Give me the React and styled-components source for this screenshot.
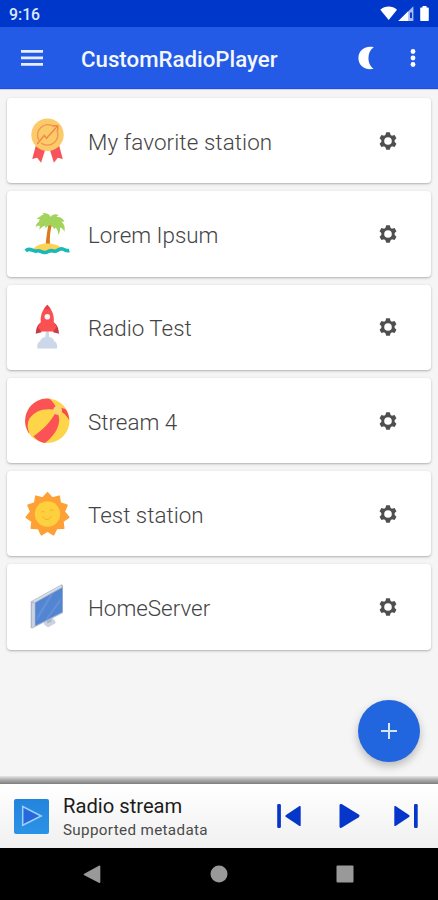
import React from 'react';
import styled, { createGlobalStyle } from 'styled-components';

const GlobalStyle = createGlobalStyle`
  body {
    margin: 0;
    background: #f5f5f5;
    font-family: Roboto, "Liberation Sans", sans-serif;
  }

  svg {
    display: block;
    flex: none;
  }

  button {
    display: flex;
    align-items: center;
    justify-content: center;
    padding: 0;
    border: 0;
    background: none;
  }
`;

const Screen = styled.div`
  position: relative;
  display: flex;
  flex-direction: column;
  width: 438px;
  height: 900px;
  overflow: hidden;
`;

const StatusBar = styled.div`
  display: flex;
  justify-content: space-between;
  align-items: center;
  height: 27px;
  padding: 0 8px 0 9px;
  box-sizing: border-box;
  background: #0037cb;
`;

const Clock = styled.span`
  padding-top: 2px;
  color: #dfe7ff;
  font-size: 15.8px;
  font-weight: 500;
`;

const Header = styled.header`
  display: flex;
  align-items: center;
  height: 62px;
  padding: 0 3px 0 20px;
  box-sizing: border-box;
  background: #235ae6;
  border-bottom: 1px solid #1f50dc;
  box-shadow: 0 1px 0 #cdd2fb;
`;

const Title = styled.h1`
  flex: 1;
  margin: 3px 0 0 37px;
  color: #f4f7ff;
  font-size: 22.25px;
  font-weight: 500;
  white-space: nowrap;
`;

const HeaderButton = styled.button`
  width: ${props => props.$width}px;
  height: 40px;
  padding-top: 1px;
`;

const StationList = styled.main`
  display: flex;
  flex-direction: column;
  flex: 1;
  gap: 8px;
  padding: 9px 7px 0;
`;

const StationCard = styled.div`
  display: flex;
  align-items: center;
  height: 85.3px;
  padding: 0 33px 0 16px;
  box-sizing: border-box;
  border-radius: 4px;
  background: #fff;
  box-shadow: 0 1px 3px rgba(0, 0, 0, 0.22), 0 1px 1px rgba(0, 0, 0, 0.08);
`;

const StationName = styled.span`
  flex: 1;
  margin: 2px 0 0 17px;
  color: #444;
  font-size: 22.4px;
  font-weight: 300;
  letter-spacing: ${props => props.$spacing || 0}px;
`;

const AddButton = styled.button`
  position: absolute;
  left: 358px;
  top: 700px;
  width: 62px;
  height: 62px;
  border-radius: 50%;
  background: #2166df;
  box-shadow: 0 4px 8px rgba(0, 0, 0, 0.25);
`;

const PlayerShadow = styled.div`
  height: 8px;
  background: linear-gradient(#e6e6e6, #b0b0b0 45%, #7d7d7d);
`;

const Player = styled.footer`
  display: flex;
  align-items: center;
  height: 64px;
  padding: 0 19px 0 14px;
  box-sizing: border-box;
  background: linear-gradient(#fff, #f0f0f0);
`;

const Cover = styled.div`
  display: flex;
  align-items: center;
  justify-content: center;
  width: 35px;
  height: 35px;
  border-radius: 2px;
  background: linear-gradient(#2384dc, #2b93e6);
`;

const TrackInfo = styled.div`
  display: flex;
  flex: 1;
  flex-direction: column;
  margin: 3px 0 0 14px;
  white-space: nowrap;
`;

const TrackTitle = styled.span`
  color: #1c1c1c;
  font-size: 20.2px;
  line-height: 24px;
`;

const TrackMeta = styled.span`
  color: #4a4a4a;
  font-size: 15.2px;
  letter-spacing: 0.35px;
  line-height: 24px;
`;

const Controls = styled.div`
  display: flex;
  justify-content: space-between;
  width: 143px;
`;

const NavBar = styled.nav`
  display: flex;
  align-items: center;
  justify-content: space-between;
  height: 52px;
  padding: 0 84px 0 83px;
  box-sizing: border-box;
  background: #000;
`;

function MedalIcon() {
  return (
    <svg width="48" height="48" viewBox="0 0 48 48">
      <path d="M13 28 9.200 42l5-1.300 3.900 5.100L22.400 32zM36 28l3.800 14-5-1.300-3.900 5.100L26.600 32z" fill="#f9545b" />
      <circle cx="24.500" cy="17.800" r="16.200" fill="#fccb69" />
      <path d="M31 9.500A10.500 10.500 0 0 0 16 23.500M18 26A10.500 10.500 0 0 0 33.800 13" fill="none" stroke="#f39352" strokeWidth="1.400" />
      <path d="m14.200 27 7-8.500 2.300 2.800L34.300 9.200M30 8.800h4.800v4.600" fill="none" stroke="#f28a4c" strokeWidth="1.500" />
    </svg>
  );
}

function PalmIcon() {
  return (
    <svg width="48" height="48" viewBox="0 0 48 48">
      <path d="M25.500 13c-.8 7-2.500 14-2.800 22h4.300c-.5-8 .2-15 2.200-21z" fill="#d77a20" />
      <path d="M26.500 11.500C24.500 5 18 4.500 13.500 9.200c3-.3 4.500.1 5.700 1.200-3.500.4-6 2.600-6.500 6.800 1.300-1.200 2.600-1.600 4-1.500l-.2 4.600c1.600-2.900 3.600-4.200 5.800-4.500l.1 3c1.500-2.200 3.200-3.200 5-3.500 2 1.300 3.300 2.400 4.100 4.300l.9-2c2 1.500 2.700 3.800 2.900 7.200 1.700-2.200 2.200-5 1.500-7.200 2 .4 3.600 1.600 4.500 4.200 1.300-3.900-.1-7.800-3-10.300l3.200.2c-1.600-3.500-4.600-5.300-8-4.600.4-1 1.100-1.700 2.100-2.200-3.500-1.300-6.800-.3-8 2.200-.7-2.600-3.500-4-8.100-4l1.800 2.900c-1 0-2 .2-2.800.7 3.500.1 6 1.800 8 4.800z" fill="#a2d45b" />
      <path d="M18 5.500c5-2.500 9 1 10.500 4.500 2-2.500 5-3 8-.5L36 15l-8-1-9 1-3-4z" fill="#a2d45b" />
      <path d="M9 40c3-4 8-6.600 15.500-6.600S37.500 36 40.500 40c-5 3-26 3-31.500 0z" fill="#fdd255" />
      <path d="M2.700 41c4.300-4.500 7 1.200 10.900 0 3.700-1.200 5 1.900 8.400 1.500 3.700-.4 4.600-3.100 8.400-1.500 3.700 1.600 5.300-3.300 9-2.100 2.900.9 3.800 2.400 6.900 1.500" fill="none" stroke="#18b9b8" strokeWidth="3.600" />
    </svg>
  );
}

function RocketIcon() {
  return (
    <svg width="48" height="48" viewBox="0 0 48 48">
      <path d="M23 28h2.700l.5 6c3 .5 4.500 2 4.800 4 2.500.7 3.700 4 3 7.500H14.300c-.6-3.500.7-6.500 3-7.500.3-2 2-3.500 5-4z" fill="#ccd8e9" />
      <path d="M18 19.500c-3 1.800-4.900 4.500-5.200 11.200l5.700-1.500zM30.600 19.500c3 1.800 5 4.500 5.400 11.200l-5.900-1.500z" fill="#c83c4a" />
      <path d="M24.300 1.800C19 7 17.300 13 17.800 19l-2.800 5L18 28.500h12.600l3-4.500-2.800-5C31.300 13 29.500 7 24.300 1.800z" fill="#fb4f50" />
      <path d="M24.300 1.800c-1.400 1.500-2.400 3-3.200 4.800h6.400c-.8-1.800-1.800-3.300-3.200-4.800z" fill="#df444c" />
      <circle cx="24.300" cy="13.700" r="2.800" fill="#f3f6fb" />
    </svg>
  );
}

function BallIcon() {
  return (
    <svg width="48" height="48" viewBox="0 0 48 48">
      <circle cx="24.300" cy="23.800" r="22.200" fill="#fed448" />
      <path d="M6.200 36.700C8 23 18 11 34 13 32.500 8.500 30 4.500 26.500 1.700A22.200 22.200 0 0 0 6.200 36.700z" fill="#fb5355" />
      <path d="M6.500 36.500C4 31 4 26 6.500 21.500 12 13.500 22 10.500 33 13 26 26 17 34 6.500 36.500z" fill="#fed448" />
      <path d="M10.500 39.200C20 33 28 24.500 33.500 14c6.500 10 .5 23-11.500 31.900-4.500-.4-8.700-3-11.500-6.700z" fill="#fb5355" />
      <path d="M35 10.500c3.500 0 6.300 1.200 8 2 1.900 3.200 3 6.700 3.300 10.600-2.700-4.700-6.300-8.300-11.300-10.200z" fill="#f44e50" />
      <circle cx="34.600" cy="13.300" r="4.400" fill="#fbd375" />
    </svg>
  );
}

// alternating outer / inner vertices of the eleven rays
const rays = Array.from({ length: 22 }, (_, i) => {
  const angle = (Math.PI * i) / 11 - Math.PI / 2;
  const radius = i % 2 ? 17 : 21.5;
  return `${24.5 + radius * Math.cos(angle)},${24.2 + radius * Math.sin(angle)}`;
}).join(' ');

function SunIcon() {
  return (
    <svg width="48" height="48" viewBox="0 0 48 48">
      <polygon points={rays} fill="#fda137" stroke="#fda137" strokeWidth="1.500" strokeLinejoin="round" />
      <circle cx="24.500" cy="24" r="12.700" fill="#fed03d" />
      <path d="M18.500 22.500c1-1.500 2.500-1.500 3.500 0M27 21c1-1.500 2.500-1.500 3.500 0M19.500 26.500c2 4 7 3.800 9-.5" fill="none" stroke="#eeaf38" strokeWidth="1" />
    </svg>
  );
}

function MonitorIcon() {
  return (
    <svg width="48" height="48" viewBox="0 0 48 48">
      <path d="M21 41.500v-2.700l8.500-4.500 1.500 2.500 1.500 1.500v2L25 44.500z" fill="#cbd3e0" />
      <path d="M24 36.500v4l4.500-1.500v-5z" fill="#aab8ce" />
      <path d="m7.700 18.500 31-17.200 1.300 1.200v27.400L9 45.500l-1.300-.8z" fill="#aeb8ca" />
      <path d="M9 20.500 11.800 19v24.200L9 44.600z" fill="#c8d2e1" />
      <path d="m9 18.500 29.500-16.200v1.800L12 19z" fill="#d9dfe9" />
      <path d="M12.300 19.700 39.300 4.800v24.300L12.300 42.700z" fill="#5285d2" />
      <path d="m14 33 13-21.200 4.500-2.500L14 38zM22 37 37.500 15v4L25 35.800z" fill="#6390d8" />
    </svg>
  );
}

function GearIcon() {
  return (
    <svg width="20" height="20" viewBox="-10 -10 20 20">
      <circle r="5.200" fill="none" stroke="#4f4f4f" strokeWidth="2.800" />
      {[0, 60, 120, 180, 240, 300].map(angle => (
        <path key={angle} d="M-2.900-5-1.800-8.700h3.600l1.100 3.700z" fill="#4f4f4f" transform={`rotate(${angle})`} />
      ))}
    </svg>
  );
}

function StatusIcons() {
  return (
    <svg width="50" height="17" viewBox="0 0 50 17" fill="#fff">
      <path d="M.3 4.700c4.800-4.200 12-4.200 16.700 0L8.700 15z" />
      <path d="M18.400 16 33.400 1.200V16z" fill="#a9bdf4" />
      <path d="M18.400 16 28.200 6.300V16z" />
      <path d="M30 7.500h2V13h-2z" fill="#0c3bca" />
      <path d="M42.500 1h4v1.400h1.300c.6 0 1 .4 1 1V15c0 .6-.4 1-1 1h-6.600c-.6 0-1-.4-1-1V3.400c0-.6.4-1 1-1h1.300z" />
    </svg>
  );
}

const stations = [
  { name: 'My favorite station', icon: MedalIcon, spacing: 0.1 },
  { name: 'Lorem Ipsum', icon: PalmIcon },
  { name: 'Radio Test', icon: RocketIcon },
  { name: 'Stream 4', icon: BallIcon },
  { name: 'Test station', icon: SunIcon },
  { name: 'HomeServer', icon: MonitorIcon },
];

export default function App() {
  return (
    <Screen>
      <GlobalStyle />
      <StatusBar>
        <Clock>9:16</Clock>
        <StatusIcons />
      </StatusBar>
      <Header>
        <HeaderButton $width={24} aria-label="Menu">
          <svg width="22" height="16" viewBox="0 0 22 16" fill="#e8eeff">
            <path d="M0 0h22v2.700H0zM0 6.600h22v2.600H0zM0 13h22v2.700H0z" />
          </svg>
        </HeaderButton>
        <Title>CustomRadioPlayer</Title>
        <HeaderButton $width={50} aria-label="Night mode">
          <svg width="16" height="24" viewBox="0 0 16 24" fill="#fff">
            <path d="M15.700 1.200C8.500-.8.400 3.500.4 12s8 12.800 15.300 10.800C8.700 18.500 8.700 5.500 15.700 1.200z" />
          </svg>
        </HeaderButton>
        <HeaderButton $width={44} aria-label="More">
          <svg width="6" height="20" viewBox="0 0 6 20" fill="#fff">
            <circle cx="3" cy="3.500" r="2.400" />
            <circle cx="3" cy="10" r="2.400" />
            <circle cx="3" cy="16.500" r="2.400" />
          </svg>
        </HeaderButton>
      </Header>
      <StationList>
        {stations.map(({ name, icon: Icon, spacing }) => (
          <StationCard key={name}>
            <Icon />
            <StationName $spacing={spacing}>{name}</StationName>
            <GearIcon />
          </StationCard>
        ))}
      </StationList>
      <AddButton aria-label="Add station">
        <svg width="16" height="16" viewBox="0 0 16 16" stroke="#d5e6ff" strokeWidth="2">
          <path d="M8 0v16M0 8h16" />
        </svg>
      </AddButton>
      <PlayerShadow />
      <Player>
        <Cover>
          <svg width="22" height="22" viewBox="0 0 22 22">
            <path d="M1.700 1.500v18.700L20.200 11z" fill="#2769dc" stroke="#9fd0fb" strokeWidth="1.500" />
          </svg>
        </Cover>
        <TrackInfo>
          <TrackTitle>Radio stream</TrackTitle>
          <TrackMeta>Supported metadata</TrackMeta>
        </TrackInfo>
        <Controls>
          <svg width="26" height="26" viewBox="0 0 26 26" fill="#0635c9">
            <rect x="1.200" y="1" width="3.700" height="24" rx="1.300" />
            <path d="M24.700 3.500v19c0 .6-.7.800-1.200.4L10 14.100c-.8-.6-.8-1.600 0-2.200l13.500-8.800c.5-.4 1.200-.2 1.200.4z" />
          </svg>
          <svg width="26" height="26" viewBox="-1.500 0 26 26" fill="#0635c9">
            <path d="M3 2.500C3 1 4.200.5 5.500 1.300l16.700 10.300c1.100.7 1.100 2 0 2.700L5.500 24.600C4.200 25.400 3 25 3 23.500z" />
          </svg>
          <svg width="26" height="26" viewBox="0 0 26 26" fill="#0635c9">
            <path d="M1.300 3.500v19c0 .6.700.8 1.200.4L16 14.100c.8-.6.8-1.600 0-2.200L2.500 3.100c-.5-.4-1.200-.2-1.200.4z" />
            <rect x="21" y="1" width="3.700" height="24" rx="1.300" />
          </svg>
        </Controls>
      </Player>
      <NavBar>
        <svg width="18" height="19" viewBox="0 0 18 19" fill="#999">
          <path d="M.8 9 16.300.5q1 0 1 1v15.600q0 1-1 1L.8 10z" />
        </svg>
        <svg width="18" height="18" viewBox="0 0 18 18" fill="#999">
          <circle cx="9" cy="9" r="8.500" />
        </svg>
        <svg width="18" height="18" viewBox="0 0 18 18" fill="#999">
          <rect x=".5" y=".5" width="17" height="17" rx="1" />
        </svg>
      </NavBar>
    </Screen>
  );
}
